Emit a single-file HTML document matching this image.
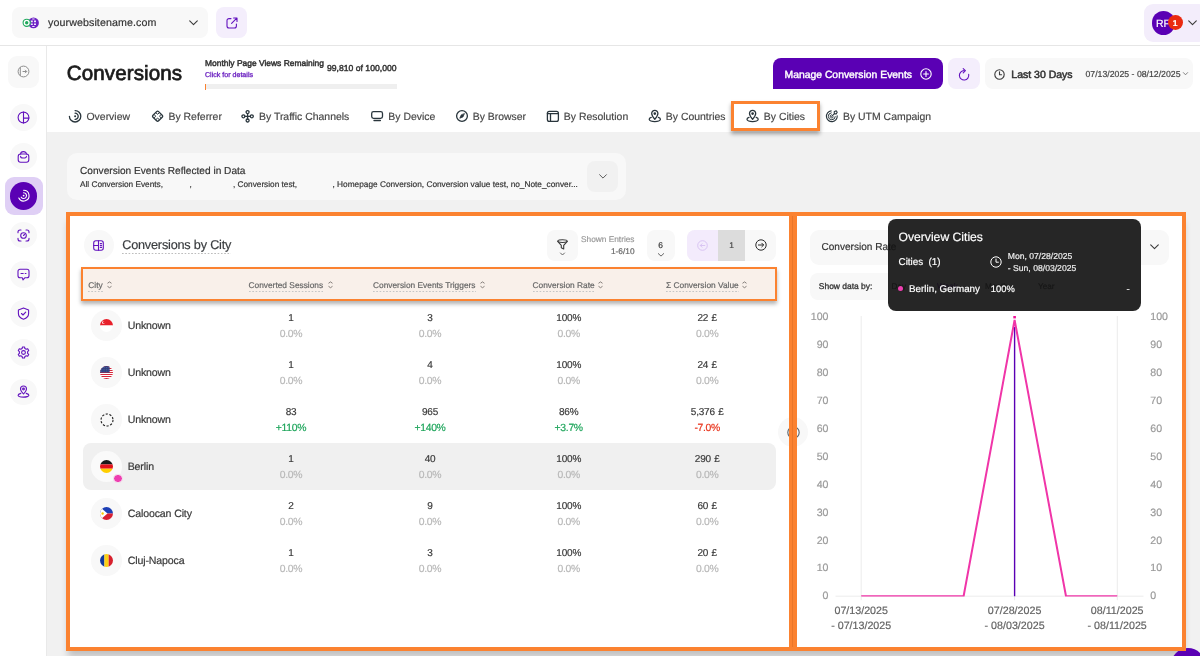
<!DOCTYPE html>
<html lang="en">
<head>
<meta charset="utf-8">
<title>Conversions by City</title>
<style>
*{box-sizing:border-box;margin:0;padding:0}
html,body{width:1200px;height:659px;overflow:hidden;background:#f1f1f1}
body{font-family:"Liberation Sans",sans-serif;color:#333;position:relative;-webkit-font-smoothing:antialiased;text-rendering:geometricPrecision}
.a{position:absolute}
.t{position:absolute;white-space:nowrap;line-height:1;-webkit-text-stroke-width:0.18px}
.c{transform:translateX(-50%)}
.r{transform:translateX(-100%)}
svg{position:absolute;overflow:visible}
.ic{fill:none;stroke:#6312be;stroke-width:1.1;stroke-linecap:round;stroke-linejoin:round}
.ig{fill:none;stroke:#3a3a3a;stroke-width:1.1;stroke-linecap:round;stroke-linejoin:round}
.sb{position:absolute;left:10px;width:27px;height:27px;border-radius:50%;background:#f8f8f8}
.tab{font-size:10.45px;color:#474747}
.dsh{background:linear-gradient(to right,#bdbdbd 60%,transparent 60%) left bottom/3.3px 1px repeat-x}
.th{font-size:8.35px;color:#666;padding-bottom:2.5px;background:linear-gradient(to right,#c6c6c6 60%,transparent 60%) left bottom/3.3px 1px repeat-x}
.v1{font-size:10px;color:#3a3a3a;letter-spacing:-0.2px;word-spacing:0.8px}
.v2{font-size:10.4px;color:#b8b8b8;letter-spacing:-0.32px}
.city{font-size:10.6px;color:#3a3a3a;left:127.7px;letter-spacing:-0.14px;-webkit-text-stroke:0.2px #3a3a3a}
.fl{position:absolute;left:91.3px;width:30.6px;height:30.6px;border-radius:50%;background:#f8f8f8}
.yl{font-size:10.6px;color:#9a9a9a}
.xl{font-size:10.7px;color:#636363}
</style>
</head>
<body>
<!-- TOPBAR -->
<div class="a" id="topbar" style="left:0;top:0;width:1200px;height:46px;background:#fff;border-bottom:1px solid #e6e6e6"></div>
<!-- HEADER WHITE -->
<div class="a" id="head" style="left:46px;top:46px;width:1154px;height:86px;background:#fff"></div>
<!-- SIDEBAR -->
<div class="a" id="side" style="left:0;top:46px;width:47px;height:613px;background:#fff;border-right:1px solid #e9e9e9"></div>
<div id="wrap" style="position:absolute;left:0;top:0;width:1200px;height:659px;will-change:transform">
<!-- topbar content -->
<div class="a" style="left:12px;top:7px;width:196px;height:31px;border-radius:8px;background:#f8f8f8"></div>
<svg style="left:0;top:0" width="60" height="46" viewBox="0 0 60 46">
  <circle cx="33.5" cy="22.9" r="5.4" fill="#6d22c4"/>
  <path d="M30.8 20.6h2v1.6h-2zM34 20.6h2v1.6h-2zM30.8 23.4h2v1.6h-2zM34 23.4h2v1.6h-2zM32.2 18.6h2.4v1h-2.4zM32.2 26h2.4v1h-2.4z" fill="#efe4fb"/>
  <circle cx="26.7" cy="22.8" r="3.6" fill="#fff" stroke="#1fa95c" stroke-width="1.1"/>
  <circle cx="26.7" cy="22.8" r="1.7" fill="#1fa95c"/>
</svg>
<div class="t" style="left:48px;top:18.00px;font-size:10.67px;color:#333;letter-spacing:0.1px">yourwebsitename.com</div>
<svg style="left:189px;top:20px" width="9" height="6" viewBox="0 0 9 6"><path d="M0.7 0.8L4.5 4.6L8.3 0.8" class="ig" stroke-width="1.2"/></svg>
<div class="a" style="left:216px;top:7px;width:30.6px;height:31.2px;border-radius:8px;background:#f4eefc"></div>
<svg style="left:225.5px;top:17px" width="12" height="12" viewBox="0 0 12 12">
  <path d="M5 1.6H3A2 2 0 0 0 1 3.6V9A2 2 0 0 0 3 11H8.4A2 2 0 0 0 10.4 9V7" class="ic" stroke-width="1.4"/>
  <path d="M5.6 6.4L10.8 1.2M7.6 1H11V4.4" class="ic" stroke-width="1.4"/>
</svg>
<div class="a" style="left:1144px;top:3.6px;width:64px;height:38.8px;border-radius:9px;background:#f3edfb"></div>
<div class="a" style="left:1151.5px;top:11.4px;width:23.2px;height:23.2px;border-radius:50%;background:#5a00b4"></div>
<div class="t" style="left:1156px;top:19.00px;font-size:10.5px;color:#fff">RF</div>
<div class="a" style="left:1168.2px;top:15.3px;width:14.8px;height:14.8px;border-radius:50%;background:#ea2a10"></div>
<div class="t c" style="left:1175px;top:19.00px;font-size:8.5px;color:#fff;font-weight:bold">1</div>
<svg style="left:1188px;top:20px" width="9" height="6" viewBox="0 0 9 6"><path d="M0.7 0.8L4.5 4.6L8.3 0.8" class="ig" stroke-width="1.2"/></svg>

<!-- sidebar content -->
<div class="a" style="left:8px;top:55.8px;width:31px;height:31.8px;border-radius:9px;background:#f8f8f8"></div>
<svg style="left:17px;top:65.3px" width="13" height="13" viewBox="0 0 13 13"><circle cx="6.5" cy="6.5" r="5.4" fill="none" stroke="#8e8e8e" stroke-width="1"/><path d="M3.3 2.2V10.8M5.6 6.5H9.6M8.1 4.9L9.7 6.5L8.1 8.1" fill="none" stroke="#8e8e8e" stroke-width="1"/></svg>
<div class="a" style="left:10.30px;top:104.20px;width:26.6px;height:26.6px;border-radius:50%;background:#f8f8f8"></div>
<svg style="left:17.10px;top:111.00px" width="13" height="13" viewBox="0 0 13 13"><circle cx="6.5" cy="6.5" r="5.4" class="ic"/><path d="M6.5 1.1V11.9M6.5 7.1H11.9" class="ic"/></svg>
<div class="a" style="left:10.30px;top:143.40px;width:26.6px;height:26.6px;border-radius:50%;background:#f8f8f8"></div>
<svg style="left:17.10px;top:150.20px" width="13" height="13" viewBox="0 0 13 13"><rect x="1.2" y="4" width="10.6" height="8.2" rx="2.4" class="ic"/><path d="M3.6 4C3.6 0.8 9.4 0.8 9.4 4M3.6 6.4C3.6 8.6 9.4 8.6 9.4 6.4" class="ic"/></svg>
<div class="a" style="left:4.6px;top:176.60px;width:38px;height:38.6px;border-radius:9px;background:#dfcff5"></div>
<div class="a" style="left:10.00px;top:182.20px;width:27.4px;height:27.4px;border-radius:50%;background:#5a00b4"></div>
<svg style="left:17.10px;top:189.40px" width="13" height="13" viewBox="0 0 13 13"><path d="M6.6 1.2A5.4 5.4 0 1 1 1.8 9" fill="none" stroke="#fff" stroke-width="1.1" stroke-linecap="round"/><path d="M6.6 3.7A2.9 2.9 0 1 1 4.2 8.2" fill="none" stroke="#fff" stroke-width="1.1" stroke-linecap="round"/><circle cx="6.6" cy="6.6" r="0.9" fill="#fff"/></svg>
<div class="a" style="left:10.30px;top:221.80px;width:26.6px;height:26.6px;border-radius:50%;background:#f8f8f8"></div>
<svg style="left:17.10px;top:228.60px" width="13" height="13" viewBox="0 0 13 13"><path d="M1 3.8V3A2 2 0 0 1 3 1H4M9 1H10A2 2 0 0 1 12 3V3.8M12 9.2V10A2 2 0 0 1 10 12H9M4 12H3A2 2 0 0 1 1 10V9.2" class="ic"/><circle cx="6.5" cy="6.5" r="2.8" class="ic"/><path d="M6.5 6.5L7.5 5.5" class="ic"/></svg>
<div class="a" style="left:10.30px;top:261.00px;width:26.6px;height:26.6px;border-radius:50%;background:#f8f8f8"></div>
<svg style="left:17.10px;top:267.80px" width="13" height="13" viewBox="0 0 13 13"><path d="M3 1.2H10A2 2 0 0 1 12 3.2V7.8A2 2 0 0 1 10 9.8H7.8L6 11.8L5.4 9.8H3A2 2 0 0 1 1 7.8V3.2A2 2 0 0 1 3 1.2Z" class="ic"/><path d="M4 5.5H6.2M8.2 5.5H9" class="ic"/></svg>
<div class="a" style="left:10.30px;top:300.20px;width:26.6px;height:26.6px;border-radius:50%;background:#f8f8f8"></div>
<svg style="left:17.10px;top:307.00px" width="13" height="13" viewBox="0 0 13 13"><path d="M6.5 1L11.6 2.9V6.4C11.6 9.3 9.3 11.2 6.5 12.2C3.7 11.2 1.4 9.3 1.4 6.4V2.9Z" class="ic"/><path d="M4.5 6.5L6 8L8.7 5.2" class="ic"/></svg>
<div class="a" style="left:10.30px;top:339.40px;width:26.6px;height:26.6px;border-radius:50%;background:#f8f8f8"></div>
<svg style="left:17.10px;top:346.20px" width="13" height="13" viewBox="0 0 13 13"><path d="M5.5 1H7.5L7.9 2.5L9.2 3.3L10.7 2.8L11.7 4.6L10.6 5.7V7.3L11.7 8.4L10.7 10.2L9.2 9.7L7.9 10.5L7.5 12H5.5L5.1 10.5L3.8 9.7L2.3 10.2L1.3 8.4L2.4 7.3V5.7L1.3 4.6L2.3 2.8L3.8 3.3L5.1 2.5Z" class="ic"/><circle cx="6.5" cy="6.5" r="1.9" class="ic"/></svg>
<div class="a" style="left:10.30px;top:378.60px;width:26.6px;height:26.6px;border-radius:50%;background:#f8f8f8"></div>
<svg style="left:17.10px;top:385.40px" width="13" height="13" viewBox="0 0 13 13"><path d="M6.5 9C4.5 6.8 3.5 5.6 3.5 4A3 3 0 0 1 9.5 4C9.5 5.6 8.5 6.8 6.5 9Z" class="ic"/><circle cx="6.5" cy="4" r="0.9" class="ic"/><path d="M3.8 8.4C2.1 8.9 1.1 9.5 1.1 10.3C1.1 11.4 3.5 12.1 6.5 12.1S11.9 11.4 11.9 10.3C11.9 9.5 10.9 8.9 9.2 8.4" class="ic"/></svg>

<!-- header content -->
<div class="t" style="letter-spacing:0.075px;left:66.8px;top:64.00px;font-size:20.6px;color:#1a1a1a;-webkit-text-stroke:0.7px #1a1a1a">Conversions</div>
<div class="t" style="left:205px;top:59.00px;font-size:8.45px;color:#333;-webkit-text-stroke:0.45px #333">Monthly Page Views Remaining</div>
<div class="t" style="left:205px;top:72.00px;font-size:7.09px;color:#6a1fc0;-webkit-text-stroke:0.3px #6a1fc0">Click for details</div>
<div class="t" style="left:327px;top:64.00px;font-size:8.63px;color:#333;-webkit-text-stroke:0.45px #333">99,810 of 100,000</div>
<div class="a" style="left:205px;top:84.4px;width:191.5px;height:4.9px;background:#efefef"></div>
<div class="a" style="left:205px;top:84px;width:1px;height:5.5px;background:#fb8230"></div>
<div class="a" style="left:773px;top:58px;width:170px;height:31.4px;border-radius:8px 8px 8px 0;background:#5a00b4"></div>
<div class="t" style="left:784.5px;top:71.00px;font-size:10.39px;color:#fff;-webkit-text-stroke:0.4px #fff">Manage Conversion Events</div>
<svg style="left:919.5px;top:68px" width="12" height="12" viewBox="0 0 12 12"><circle cx="6" cy="6" r="5.2" fill="none" stroke="#fff" stroke-width="1.1"/><path d="M6 3.6V8.4M3.6 6H8.4" fill="none" stroke="#fff" stroke-width="1.1" stroke-linecap="round"/></svg>
<div class="a" style="left:948px;top:58px;width:31.5px;height:31.4px;border-radius:8px;background:#f4eefc"></div>
<svg style="left:958px;top:67.5px" width="12" height="13" viewBox="0 0 12 13"><path d="M6.2 2.6A4.7 4.7 0 1 0 10.7 6.4" class="ic" stroke-width="1.3"/><path d="M5.2 0.6L7.4 2.6L5.2 4.8" class="ic" stroke-width="1.3"/></svg>
<div class="a" style="left:985px;top:58px;width:207.5px;height:31.4px;border-radius:8px;background:#f8f8f8"></div>
<svg style="left:993.5px;top:68.5px" width="11" height="11" viewBox="0 0 11 11"><circle cx="5.5" cy="5.5" r="4.7" class="ig" stroke-width="1"/><path d="M5.5 2.8V5.7H7.6" class="ig" stroke-width="1"/></svg>
<div class="t" style="left:1011.3px;top:70.00px;font-size:10.50px;color:#333;-webkit-text-stroke:0.5px #333">Last 30 Days</div>
<div class="t" style="left:1085.5px;top:70.00px;font-size:8.72px;color:#444">07/13/2025 - 08/12/2025</div>
<svg style="left:1182.5px;top:72px" width="5" height="4" viewBox="0 0 5 4"><path d="M0.4 0.6L2.5 2.8L4.6 0.6" class="ig" style="stroke:#666;stroke-width:0.8"/></svg>

<!-- tabs -->
<div class="a" style="left:731px;top:101px;width:88.5px;height:30px;border:3px solid #fb8230;background:#fff;box-shadow:0 3px 4px rgba(0,0,0,0.35)"></div>
<svg style="left:0;top:0" width="1200" height="140" viewBox="0 0 1200 140"><g class="ig" style="stroke:#29353c;stroke-width:1.3">
<g transform="translate(75.1 116.3)"><path d="M0 -5.7A5.7 5.7 0 1 1 -5.7 0"/><path d="M0 -3.1A3.1 3.1 0 0 1 0 3.1"/><circle r="1" fill="#29353c" stroke="none"/></g>
<g transform="translate(157.6 116.2)"><path d="M-1 -4.6Q0 -5.6 1 -4.6L4.6 -1Q5.6 0 4.6 1L1 4.6Q0 5.6 -1 4.6L-4.6 1Q-5.6 0 -4.6 -1Z" style="stroke-width:1.3"/><path d="M-1.4 -3.1L0 -2L1.4 -3.1M-1.4 3.1L0 2L1.4 3.1M-3.1 -1.4L-2 0L-3.1 1.4M3.1 -1.4L2 0L3.1 1.4" style="stroke-width:1"/></g>
<g transform="translate(247.6 116.3)"><circle cx="0" cy="-4.2" r="1.5"/><circle cx="0" cy="4.2" r="1.5"/><circle cx="-4.2" cy="0" r="1.5"/><circle cx="4.2" cy="0" r="1.5"/><path d="M0 -2.7V2.7M-2.7 0H2.7"/></g>
<g transform="translate(0 0)"><rect x="371.7" y="111.6" width="10.8" height="6.7" rx="1.8"/><path d="M374 120.5H380.4"/></g>
<g transform="translate(462 116)"><circle r="5.4"/><path d="M2.3 -2.1L0.9 1L-2.2 2.2L-0.8 -0.9Z" fill="#29353c" stroke-width="0.8"/></g>
<g transform="translate(0 0)"><rect x="547.4" y="111.4" width="11" height="9.9" rx="1.9"/><path d="M547.4 113.6H558.4M550.5 113.6V121.3"/></g>
<g transform="translate(654.8 116.4)"><path d="M0 -6A3.1 3.1 0 0 1 3.1 -2.9C3.1 -0.9 1.6 0.9 0 2.9C-1.6 0.9 -3.1 -0.9 -3.1 -2.9A3.1 3.1 0 0 1 0 -6Z"/><circle cx="0" cy="-2.8" r="0.7" fill="#29353c"/><path d="M-3.6 1C-5 1.5 -5.6 2.2 -5.6 2.9C-5.6 4.3 -3 5.2 0 5.2S5.6 4.3 5.6 2.9C5.6 2.2 5 1.5 3.6 1"/></g>
<g transform="translate(752.6 116.4)"><path d="M0 -6A3.1 3.1 0 0 1 3.1 -2.9C3.1 -0.9 1.6 0.9 0 2.9C-1.6 0.9 -3.1 -0.9 -3.1 -2.9A3.1 3.1 0 0 1 0 -6Z"/><circle cx="0" cy="-2.8" r="0.7" fill="#29353c"/><path d="M-3.6 1C-5 1.5 -5.6 2.2 -5.6 2.9C-5.6 4.3 -3 5.2 0 5.2S5.6 4.3 5.6 2.9C5.6 2.2 5 1.5 3.6 1"/></g>
<g transform="translate(831.8 116.3)"><path d="M5.4 -0.6A5.4 5.4 0 1 1 -0.6 -5.4" stroke-width="1.1"/><path d="M3.5 0.4A3.5 3.5 0 1 1 -0.6 -3.5" stroke-width="1"/><path d="M1.7 0.6A1.7 1.7 0 1 1 -0.5 -1.6" stroke-width="1"/><path d="M0 0L2.6 -2.6M2.4 -4.6L4.4 -5.6L5.4 -4L4.4 -2.4L2.6 -2.6Z" stroke-width="1.1"/></g>
</g></svg>
<div class="t tab" style="left:86.5px;top:113.00px">Overview</div>
<div class="t tab" style="left:168.5px;top:113.00px">By Referrer</div>
<div class="t tab" style="left:259px;top:113.00px">By Traffic Channels</div>
<div class="t tab" style="left:388.3px;top:113.00px">By Device</div>
<div class="t tab" style="left:472.7px;top:113.00px">By Browser</div>
<div class="t tab" style="left:563.8px;top:113.00px">By Resolution</div>
<div class="t tab" style="left:665.8px;top:113.00px">By Countries</div>
<div class="t tab" style="left:763.8px;top:113.00px">By Cities</div>
<div class="t tab" style="left:843px;top:113.00px">By UTM Campaign</div>

<!-- events card -->
<div class="a" style="left:67px;top:152.5px;width:559px;height:47px;border-radius:10px;background:#f8f8f8"></div>
<div class="t" style="left:80px;top:167.00px;font-size:10.14px;color:#333">Conversion Events Reflected in Data</div>
<div class="t" style="left:80px;top:181.00px;font-size:8.26px;color:#333">All Conversion Events,</div>
<div class="t" style="left:189.5px;top:181.00px;font-size:8.2px;color:#333">,</div>
<div class="t" style="left:233px;top:181.00px;font-size:8.24px;color:#333">, Conversion test,</div>
<div class="t" style="left:332.5px;top:180.00px;font-size:8.29px;color:#333">, Homepage Conversion, Conversion value test, no_Note_conver...</div>
<div class="a" style="left:587px;top:161px;width:31px;height:30.5px;border-radius:8px;background:#f1f1f1"></div>
<svg style="left:598.5px;top:174px" width="8" height="5" viewBox="0 0 8 5"><path d="M0.6 0.7L4 4.1L7.4 0.7" class="ig" style="stroke:#5c5c5c;stroke-width:1"/></svg>

<!-- left panel -->
<div class="a" style="left:66px;top:212px;width:1120px;height:439px;background:#fff;box-shadow:0 8px 7px -2px rgba(0,0,0,0.2)"></div>
<div class="a" style="left:1171px;top:648.3px;width:34px;height:34px;border-radius:50%;background:#5a00b4"></div>
<div class="a" style="left:778px;top:416.8px;width:30px;height:30px;border-radius:50%;background:#f8f8f8"></div>
<svg style="left:786.5px;top:425.5px" width="13" height="13" viewBox="0 0 13 13"><circle cx="6.5" cy="6.5" r="5.7" fill="none" stroke="#59626a" stroke-width="1.1"/></svg>
<div class="a" style="left:66px;top:212px;width:727px;height:439px;border:4px solid #fb8230"></div>
<div class="a" style="left:793px;top:212px;width:393px;height:439px;border:4px solid #fb8230"></div>
<div class="a" style="left:792px;top:216px;width:1.4px;height:431px;background:rgba(120,40,0,0.13)"></div>
<div class="a" style="left:83.5px;top:230px;width:30px;height:30px;border-radius:50%;background:#f8f8f8"></div>
<svg style="left:93px;top:239.5px" width="11" height="11" viewBox="0 0 11 11"><rect x="0.7" y="0.7" width="9.6" height="9.6" rx="2.2" class="ic" stroke-width="1.2"/><path d="M5.5 0.7V10.3M0.7 5.5H5.5M7.3 3.6H8.6M7.3 5.5H8.6M7.3 7.4H8.6" class="ic" stroke-width="1"/></svg>
<div class="t dsh" style="letter-spacing:-0.201px;left:122.2px;top:239.01px;font-size:12.7px;color:#383b3e;padding-bottom:2px">Conversions by City</div>
<div class="a" style="left:546.8px;top:229.5px;width:30.8px;height:31px;border-radius:8px;background:#f8f8f8"></div>
<svg style="left:556.5px;top:239px" width="11" height="18" viewBox="0 0 11 18"><path d="M0.7 2.3C0.7 0.2 10.3 0.2 10.3 2.3L6.7 6.4V10L4.3 8.8V6.4Z" class="ig"/><path d="M1 2.6C3 3.8 8 3.8 10 2.6" class="ig" stroke-width="0.9"/><path d="M3.5 14L5.5 16L7.5 14" class="ig" style="stroke:#555;stroke-width:0.9"/></svg>
<div class="t r" style="left:634.5px;top:235.00px;font-size:8.31px;color:#999">Shown Entries</div>
<div class="t r" style="left:634.5px;top:247.01px;font-size:8.30px;color:#666">1-6/10</div>
<div class="a" style="left:646.8px;top:229.5px;width:28.2px;height:31px;border-radius:8px;background:#f8f8f8"></div>
<div class="t c" style="left:660.7px;top:241.00px;font-size:8.4px;color:#333">6</div>
<svg style="left:658px;top:252.5px" width="6" height="4" viewBox="0 0 6 4"><path d="M0.3 0.6L3 3.1L5.7 0.6" class="ig" style="stroke:#555;stroke-width:0.9"/></svg>
<div class="a" style="left:687px;top:229.5px;width:89.3px;height:31px;border-radius:8px;background:#f8f8f8;overflow:hidden"><div class="a" style="left:0;top:0;width:31.3px;height:31px;background:#f3ebfc"></div><div class="a" style="left:31.3px;top:0;width:27px;height:31px;background:#dcdcdc"></div></div>
<svg style="left:697px;top:239.5px" width="11" height="11" viewBox="0 0 11 11"><circle cx="5.5" cy="5.5" r="4.8" fill="none" stroke="#d9c4f3" stroke-width="1"/><path d="M7.8 5.5H3.4M5 3.8L3.3 5.5L5 7.2" fill="none" stroke="#d9c4f3" stroke-width="1" stroke-linecap="round" stroke-linejoin="round"/></svg>
<div class="t c" style="left:731.7px;top:241.00px;font-size:8.4px;color:#444">1</div>
<svg style="left:755px;top:239px" width="12" height="12" viewBox="0 0 12 12"><circle cx="6" cy="6" r="5.2" fill="none" stroke="#2a2a2a" stroke-width="1"/><path d="M3.4 6H8.4M6.8 4.2L8.6 6L6.8 7.8" fill="none" stroke="#2a2a2a" stroke-width="1" stroke-linecap="round" stroke-linejoin="round"/></svg>
<div class="a" style="left:81px;top:267px;width:695.8px;height:33.5px;border:2px solid #fb8230;background:#f9f0ea;box-shadow:0 3px 4px rgba(0,0,0,0.3)"></div>
<div class="t th" style="left:88.3px;top:281.00px">City</div>
<svg style="left:107.3px;top:281.2px" width="5" height="8" viewBox="0 0 5 8"><path d="M0.5 2.3L2.5 0.9L4.5 2.3M0.5 5.3L2.5 6.7L4.5 5.3" fill="none" stroke="#7d7773" stroke-width="0.95" stroke-linejoin="round"/></svg>
<div class="t th" style="left:248.5px;top:281.00px">Converted Sessions</div>
<svg style="left:327.8px;top:281.2px" width="5" height="8" viewBox="0 0 5 8"><path d="M0.5 2.3L2.5 0.9L4.5 2.3M0.5 5.3L2.5 6.7L4.5 5.3" fill="none" stroke="#7d7773" stroke-width="0.95" stroke-linejoin="round"/></svg>
<div class="t th" style="left:373px;top:281.00px">Conversion Events Triggers</div>
<svg style="left:480.3px;top:281.2px" width="5" height="8" viewBox="0 0 5 8"><path d="M0.5 2.3L2.5 0.9L4.5 2.3M0.5 5.3L2.5 6.7L4.5 5.3" fill="none" stroke="#7d7773" stroke-width="0.95" stroke-linejoin="round"/></svg>
<div class="t th" style="left:532.5px;top:281.00px">Conversion Rate</div>
<svg style="left:598.3px;top:281.2px" width="5" height="8" viewBox="0 0 5 8"><path d="M0.5 2.3L2.5 0.9L4.5 2.3M0.5 5.3L2.5 6.7L4.5 5.3" fill="none" stroke="#7d7773" stroke-width="0.95" stroke-linejoin="round"/></svg>
<div class="t th" style="left:666px;top:281.00px">Σ Conversion Value</div>
<svg style="left:742.3px;top:281.2px" width="5" height="8" viewBox="0 0 5 8"><path d="M0.5 2.3L2.5 0.9L4.5 2.3M0.5 5.3L2.5 6.7L4.5 5.3" fill="none" stroke="#7d7773" stroke-width="0.95" stroke-linejoin="round"/></svg>
<div class="fl" style="top:310px;background:#f8f8f8"></div>
<svg style="left:100px;top:319px;overflow:hidden;border-radius:50%" width="13" height="13" viewBox="0 0 13 13"><path d="M0 0H13V6.5H0Z" fill="#e8202a"/><path d="M0 6.5H13V13H0Z" fill="#fff"/><circle cx="3.6" cy="3.4" r="1.5" fill="#fff"/><circle cx="4.3" cy="3.4" r="1.3" fill="#e8202a"/></svg>
<div class="t city" style="top:321.01px">Unknown</div>
<div class="t c v1" style="left:291px;top:314.01px">1</div>
<div class="t c v2" style="left:291px;top:330.01px">0.0%</div>
<div class="t c v1" style="left:430px;top:314.01px">3</div>
<div class="t c v2" style="left:430px;top:330.01px">0.0%</div>
<div class="t c v1" style="left:568.7px;top:314.01px">100%</div>
<div class="t c v2" style="left:568.7px;top:330.01px">0.0%</div>
<div class="t c v1" style="left:707.2px;top:314.01px">22 £</div>
<div class="t c v2" style="left:707.2px;top:330.01px">0.0%</div>
<div class="fl" style="top:357px;background:#f8f8f8"></div>
<svg style="left:100px;top:366px;overflow:hidden;border-radius:50%" width="13" height="13" viewBox="0 0 13 13"><rect width="13" height="13" fill="#fff"/><path d="M0 0.5H13M0 2.5H13M0 4.5H13M0 6.5H13M0 8.5H13M0 10.5H13M0 12.5H13" stroke="#d8283c" stroke-width="1" shape-rendering="crispEdges"/><rect width="9.6" height="6.6" fill="#2f3f7f"/><path d="M1 1.5H9M1 3.3H9M1 5.1H9" stroke="#6f7cae" stroke-width="0.6" stroke-dasharray="0.8 0.9"/></svg>
<div class="t city" style="top:368.01px">Unknown</div>
<div class="t c v1" style="left:291px;top:361.01px">1</div>
<div class="t c v2" style="left:291px;top:377.01px">0.0%</div>
<div class="t c v1" style="left:430px;top:361.01px">4</div>
<div class="t c v2" style="left:430px;top:377.01px">0.0%</div>
<div class="t c v1" style="left:568.7px;top:361.01px">100%</div>
<div class="t c v2" style="left:568.7px;top:377.01px">0.0%</div>
<div class="t c v1" style="left:707.2px;top:361.01px">24 £</div>
<div class="t c v2" style="left:707.2px;top:377.01px">0.0%</div>
<div class="fl" style="top:404px;background:#f8f8f8"></div>
<svg style="left:99.5px;top:412.5px" width="14" height="14" viewBox="0 0 14 14"><circle cx="7" cy="7" r="6" fill="none" stroke="#222" stroke-width="1.1" stroke-dasharray="2.2 1.55"/></svg>
<div class="t city" style="top:415.01px">Unknown</div>
<div class="t c v1" style="left:291px;top:408.01px">83</div>
<div class="t c v2" style="left:291px;top:424.01px;color:#1ea55b">+110%</div>
<div class="t c v1" style="left:430px;top:408.01px">965</div>
<div class="t c v2" style="left:430px;top:424.01px;color:#1ea55b">+140%</div>
<div class="t c v1" style="left:568.7px;top:408.01px">86%</div>
<div class="t c v2" style="left:568.7px;top:424.01px;color:#1ea55b">+3.7%</div>
<div class="t c v1" style="left:707.2px;top:408.01px">5,376 £</div>
<div class="t c v2" style="left:707.2px;top:424.01px;color:#e8341c">-7.0%</div>
<div class="a" style="left:83px;top:443px;width:693.2px;height:46.6px;border-radius:8px;background:#f0f0f0"></div>
<div class="fl" style="top:451px;background:#fafafa"></div>
<svg style="left:100px;top:460px;overflow:hidden;border-radius:50%" width="13" height="13" viewBox="0 0 13 13"><rect width="13" height="4.4" fill="#1a1a1a"/><rect y="4.4" width="13" height="4.3" fill="#e3121b"/><rect y="8.7" width="13" height="4.3" fill="#ffcf00"/></svg>
<div class="a" style="left:113.4px;top:473.7px;width:9.6px;height:9.6px;border-radius:50%;background:#ee3fb0;border:1px solid #f6f6f6"></div>
<div class="t city" style="top:462.01px">Berlin</div>
<div class="t c v1" style="left:291px;top:455.01px">1</div>
<div class="t c v2" style="left:291px;top:471.01px">0.0%</div>
<div class="t c v1" style="left:430px;top:455.01px">40</div>
<div class="t c v2" style="left:430px;top:471.01px">0.0%</div>
<div class="t c v1" style="left:568.7px;top:455.01px">100%</div>
<div class="t c v2" style="left:568.7px;top:471.01px">0.0%</div>
<div class="t c v1" style="left:707.2px;top:455.01px">290 £</div>
<div class="t c v2" style="left:707.2px;top:471.01px">0.0%</div>
<div class="fl" style="top:498px;background:#f8f8f8"></div>
<svg style="left:100px;top:507px;overflow:hidden;border-radius:50%" width="13" height="13" viewBox="0 0 13 13"><rect width="13" height="6.5" fill="#1d3fb5"/><rect y="6.5" width="13" height="6.5" fill="#d81f32"/><path d="M0 0L7.5 6.5L0 13Z" fill="#fff"/><circle cx="2.6" cy="6.5" r="1.2" fill="#f7c900"/></svg>
<div class="t city" style="top:509.01px">Caloocan City</div>
<div class="t c v1" style="left:291px;top:502.01px">2</div>
<div class="t c v2" style="left:291px;top:518.01px">0.0%</div>
<div class="t c v1" style="left:430px;top:502.01px">9</div>
<div class="t c v2" style="left:430px;top:518.01px">0.0%</div>
<div class="t c v1" style="left:568.7px;top:502.01px">100%</div>
<div class="t c v2" style="left:568.7px;top:518.01px">0.0%</div>
<div class="t c v1" style="left:707.2px;top:502.01px">60 £</div>
<div class="t c v2" style="left:707.2px;top:518.01px">0.0%</div>
<div class="fl" style="top:545px;background:#f8f8f8"></div>
<svg style="left:100px;top:554px;overflow:hidden;border-radius:50%" width="13" height="13" viewBox="0 0 13 13"><rect width="4.4" height="13" fill="#12399e"/><rect x="4.4" width="4.3" height="13" fill="#fcd116"/><rect x="8.7" width="4.3" height="13" fill="#d7202d"/></svg>
<div class="t city" style="top:556.01px">Cluj-Napoca</div>
<div class="t c v1" style="left:291px;top:549.01px">1</div>
<div class="t c v2" style="left:291px;top:565.01px">0.0%</div>
<div class="t c v1" style="left:430px;top:549.01px">3</div>
<div class="t c v2" style="left:430px;top:565.01px">0.0%</div>
<div class="t c v1" style="left:568.7px;top:549.01px">100%</div>
<div class="t c v2" style="left:568.7px;top:565.01px">0.0%</div>
<div class="t c v1" style="left:707.2px;top:549.01px">20 £</div>
<div class="t c v2" style="left:707.2px;top:565.01px">0.0%</div>

<!-- right panel -->
<div class="a" style="left:809.5px;top:229.5px;width:359.5px;height:35.5px;border-radius:9px;background:#f8f8f8"></div>
<div class="t" style="left:821.5px;top:243.00px;font-size:10.07px;color:#333">Conversion Rate</div>
<svg style="left:1150px;top:243.5px" width="9" height="6" viewBox="0 0 9 6"><path d="M0.7 0.8L4.5 4.6L8.3 0.8" class="ig" stroke-width="1.1"/></svg>
<div class="a" style="left:809.5px;top:273px;width:300px;height:26.5px;border-radius:8px;background:#f8f8f8"></div>
<div class="t" style="left:818.8px;top:282.01px;font-size:8.46px;color:#333;-webkit-text-stroke:0.3px #333">Show data by:</div>
<div class="t" style="left:891.5px;top:283.00px;font-size:8.2px;color:#333">Day</div>
<div class="t" style="left:937px;top:283.00px;font-size:8.2px;color:#5a00b4">Week</div>
<div class="t" style="left:985px;top:283.00px;font-size:8.2px;color:#333">Month</div>
<div class="t" style="left:1038px;top:283.00px;font-size:8.2px;color:#333">Year</div>
<svg style="left:0;top:0" width="1200" height="659" viewBox="0 0 1200 659">
<path d="M861.2 316V600.2M1117.3 316V600.2M1014.6 596.2V600.2" stroke="#ececec" stroke-width="1" fill="none"/>
<path d="M835.5 596.2H1143.5" stroke="#ececec" stroke-width="1" fill="none"/>
<path d="M1014.6 327V596.2" stroke="#5a00b4" stroke-width="1.4" fill="none"/>
<svg x="850" y="300" width="280" height="296.4" viewBox="850 300 280 296.4" style="position:static;overflow:hidden"><path d="M861.2 596.2H963.6L1014.6 320.0L1066 596.2H1117.3" stroke="#f035a8" stroke-width="2" fill="none" stroke-linejoin="miter"/></svg>
<rect x="1013.3" y="316" width="2.6" height="2.4" fill="#f0109a"/>
</svg>
<div class="t r yl" style="left:828.5px;top:591.01px">0</div>
<div class="t yl" style="left:1150.3px;top:591.01px">0</div>
<div class="t r yl" style="left:828.5px;top:563.01px">10</div>
<div class="t yl" style="left:1150.3px;top:563.01px">10</div>
<div class="t r yl" style="left:828.5px;top:536.00px">20</div>
<div class="t yl" style="left:1150.3px;top:536.00px">20</div>
<div class="t r yl" style="left:828.5px;top:508.01px">30</div>
<div class="t yl" style="left:1150.3px;top:508.01px">30</div>
<div class="t r yl" style="left:828.5px;top:480.00px">40</div>
<div class="t yl" style="left:1150.3px;top:480.00px">40</div>
<div class="t r yl" style="left:828.5px;top:452.01px">50</div>
<div class="t yl" style="left:1150.3px;top:452.01px">50</div>
<div class="t r yl" style="left:828.5px;top:424.01px">60</div>
<div class="t yl" style="left:1150.3px;top:424.01px">60</div>
<div class="t r yl" style="left:828.5px;top:396.00px">70</div>
<div class="t yl" style="left:1150.3px;top:396.00px">70</div>
<div class="t r yl" style="left:828.5px;top:368.01px">80</div>
<div class="t yl" style="left:1150.3px;top:368.01px">80</div>
<div class="t r yl" style="left:828.5px;top:340.00px">90</div>
<div class="t yl" style="left:1150.3px;top:340.00px">90</div>
<div class="t r yl" style="left:828.5px;top:312.01px">100</div>
<div class="t yl" style="left:1150.3px;top:312.01px">100</div>
<div class="t c xl" style="left:861.2px;top:606.01px">07/13/2025</div>
<div class="t c xl" style="left:861.2px;top:621.00px">- 07/13/2025</div>
<div class="t c xl" style="left:1014.6px;top:606.01px">07/28/2025</div>
<div class="t c xl" style="left:1014.6px;top:621.00px">- 08/03/2025</div>
<div class="t c xl" style="left:1117.2px;top:606.01px">08/11/2025</div>
<div class="t c xl" style="left:1117.2px;top:621.00px">- 08/11/2025</div>
<div class="a" style="left:888px;top:218.5px;width:253px;height:92px;border-radius:8px;background:rgba(20,20,20,0.92)"></div>
<div class="t" style="left:898.5px;top:231.00px;font-size:12.17px;color:#fff">Overview Cities</div>
<div class="t" style="left:898.5px;top:258.00px;font-size:9.88px;color:#fff;word-spacing:2.5px">Cities (1)</div>
<svg style="left:990px;top:256px" width="12" height="12" viewBox="0 0 12 12"><circle cx="6" cy="6" r="5.2" fill="none" stroke="#fff" stroke-width="1"/><path d="M6 3V6.2H8.4" fill="none" stroke="#fff" stroke-width="1" stroke-linecap="round" stroke-linejoin="round"/></svg>
<div class="t" style="left:1007.8px;top:252.00px;font-size:8.60px;color:#eee">Mon, 07/28/2025</div>
<div class="t" style="left:1007.8px;top:264.01px;font-size:8.62px;color:#eee">- Sun, 08/03/2025</div>
<div class="a" style="left:898.3px;top:286.2px;width:5px;height:5px;border-radius:50%;background:#ee3fb0"></div>
<div class="t" style="left:909px;top:285.01px;font-size:9.83px;color:#fff">Berlin, Germany</div>
<div class="t" style="left:990.8px;top:284.01px;font-size:9.40px;color:#fff">100%</div>
<div class="t" style="left:1126.5px;top:285.01px;font-size:9.8px;color:#fff">-</div>
<div class="a" style="left:0;top:656px;width:1200px;height:3px;background:#fff"></div>


</div>
</body>
</html>
